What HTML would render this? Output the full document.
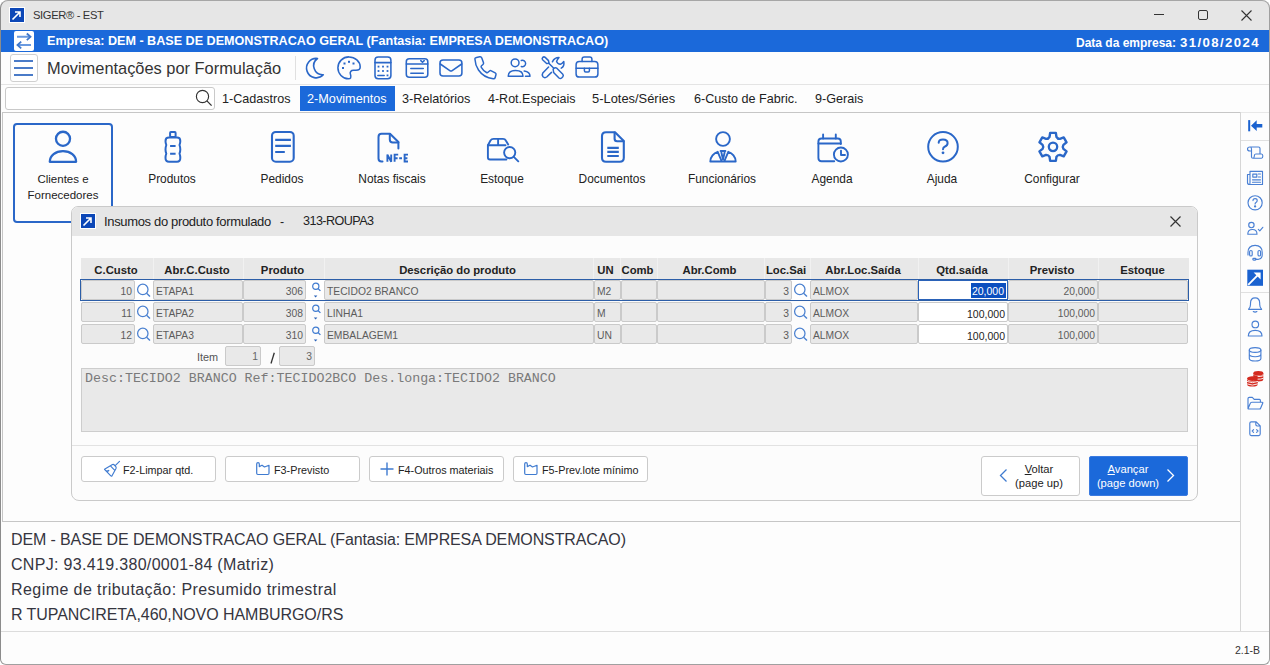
<!DOCTYPE html>
<html><head><meta charset="utf-8">
<style>
*{box-sizing:border-box;margin:0;padding:0}
html,body{width:1270px;height:665px;overflow:hidden;background:#fff;font-family:"Liberation Sans",sans-serif;color:#222}
.a{position:absolute}
#win{position:absolute;left:0;top:0;width:1270px;height:665px;background:#fdfdfd;border-radius:8px 8px 6px 6px;overflow:hidden}
#frame{position:absolute;left:0;top:0;width:1270px;height:665px;border:1px solid #8c8c8c;border-top-color:#a6a6a6;border-right-color:#a0a0a0;border-bottom-color:#a0a0a0;border-radius:8px 8px 6px 6px;pointer-events:none}
.t{white-space:nowrap;line-height:1}
svg{position:absolute;overflow:visible}
.ic{fill:none;stroke:#2a67c8;stroke-width:2.3;stroke-linecap:round;stroke-linejoin:round}
.lbl{position:absolute;width:110px;text-align:center;font-size:11.9px;color:#222;white-space:nowrap;line-height:1}
.c{position:absolute;height:20px;border:1px solid #cacaca;border-radius:2px;background:#e9e9e9;color:#5c5c5c;font-size:10.3px;line-height:22px;padding:0 2px 0 2px;white-space:nowrap;overflow:hidden}
.c.w{background:#fff;color:#222;font-size:10.5px}
.hl{position:absolute;text-align:center;font-size:11.3px;font-weight:bold;color:#222;white-space:nowrap;line-height:1}
.btn{position:absolute;top:456px;width:135px;height:26px;border:1px solid #cbcbcb;border-radius:3px;background:#fff}
.btn span{position:absolute;top:8px;font-size:10.8px;color:#222;white-space:nowrap;line-height:1}
</style></head><body>
<div id="win">
  <!-- title bar -->
  <div class="a" style="left:0;top:0;width:1270px;height:30px;background:#e6e6e6"></div>
  <div class="a" style="left:9px;top:7px;width:16px;height:16px;background:#fff"></div>
  <div class="a" style="left:10px;top:8px;width:14px;height:14px;background:#0c47b7"></div>
  <svg style="left:10px;top:8px" width="14" height="14"><path d="M2.5 11.5 L10 4 M5 4 H10 V9" stroke="#fff" stroke-width="1.6" fill="none"/></svg>
  <div class="a t" style="left:33px;top:10px;font-size:11.2px;letter-spacing:-0.35px;color:#333">SIGER® - EST</div>
  <!-- window controls -->
  <div class="a" style="left:1154px;top:14px;width:10px;height:1px;background:#333"></div>
  <div class="a" style="left:1198px;top:10px;width:10px;height:10px;border:1px solid #333;border-radius:2px"></div>
  <svg style="left:1241px;top:10px" width="11" height="11"><path d="M0.5 0.5 L10.5 10.5 M10.5 0.5 L0.5 10.5" stroke="#333" stroke-width="1.1"/></svg>

  <!-- blue bar -->
  <div class="a" style="left:0;top:30px;width:1270px;height:22px;background:#1b69da"></div>
  <div class="a" style="left:14px;top:31px;width:20px;height:20px;background:#fff;border-radius:2px"></div>
  <svg style="left:14px;top:31px" width="20" height="20"><path d="M3 5.8 H15.5 M17 14 H4.5" stroke="#6a9ae0" stroke-width="2" fill="none"/><path d="M12.8 2.5 L16.5 5.8 L12.8 9.1 M7.2 10.7 L3.5 14 L7.2 17.3" stroke="#3f78cc" stroke-width="1.8" fill="none"/></svg>
  <div class="a t" style="left:47px;top:35px;font-size:12.6px;font-weight:bold;color:#fff">Empresa: DEM - BASE DE DEMONSTRACAO GERAL (Fantasia: EMPRESA DEMONSTRACAO)</div>
  <div class="a t" style="left:1076px;top:36.5px;font-size:12px;font-weight:bold;color:#fff">Data da empresa:</div><div class="a t" style="left:1180px;top:35.5px;font-size:13.2px;letter-spacing:1.4px;font-weight:bold;color:#fff">31/08/2024</div>

  <!-- toolbar -->
  <div class="a" style="left:10px;top:54px;width:28px;height:28px;border:1px solid #cfcfcf;border-radius:3px;background:#fff"></div>
  <div class="a" style="left:14px;top:60px;width:19px;height:2px;background:#4a7bc8"></div>
  <div class="a" style="left:14px;top:67px;width:19px;height:2px;background:#4a7bc8"></div>
  <div class="a" style="left:14px;top:74px;width:19px;height:2px;background:#4a7bc8"></div>
  <div class="a t" style="left:47px;top:60px;font-size:16.4px;color:#333">Movimentações por Formulação</div>
  <div class="a" style="left:295px;top:56px;width:1px;height:24px;background:#e0e0e0"></div>
  <div class="a" style="left:0;top:84px;width:1270px;height:1px;background:#e4e4e4"></div>
  <!-- small toolbar icons -->
  <svg style="left:0;top:0;stroke-width:1.55" width="1270" height="90" class="ic">
    <path d="M317.5 58.5 A9.7 9.7 0 1 0 323.3 74.8 A9 9 0 0 1 317.5 58.5 Z" stroke-width="1.6"/>
    <path d="M349 56.9 C355 56.9 360.2 61.5 360.2 67 C360.2 69.5 358.5 70.3 356 70.3 H353.5 C351 70.3 349.5 72 350.5 74.5 C351.5 77.5 350.5 78.8 348.5 78.8 C342.5 78.8 337.9 73.5 337.9 67.8 C337.9 61.8 342.8 56.9 349 56.9 Z"/>
    <g fill="#2a67c8" stroke="none"><rect x="343.5" y="62.5" width="2" height="2"/><rect x="348" y="60.8" width="2" height="2"/><rect x="352.5" y="62.5" width="2" height="2"/><rect x="342" y="67" width="2" height="2"/></g>
    <rect x="375" y="57" width="15.9" height="21.7" rx="3.2"/>
    <path d="M375 62.6 H390.9"/>
    <g fill="#2a67c8" stroke="none"><rect x="377.6" y="65.7" width="1.8" height="1.8"/><rect x="382.1" y="65.7" width="1.8" height="1.8"/><rect x="386.6" y="65.7" width="1.8" height="1.8"/><rect x="377.6" y="70.1" width="1.8" height="1.8"/><rect x="382.1" y="70.1" width="1.8" height="1.8"/><rect x="386.6" y="70.1" width="1.8" height="1.8"/><rect x="386.6" y="74.5" width="1.8" height="1.8"/></g>
    <path d="M377.8 75.4 H384.2" stroke-width="1.5"/>
    <rect x="406.3" y="58.8" width="21.5" height="18.5" rx="3"/>
    <path d="M406.3 64.1 H427.8 M410.8 68.6 H423.3 M410.8 73.2 H423.3 M420.8 60.6 L422.5 62.3 L424.2 60.6" stroke-width="1.5"/>
    <rect x="440" y="60" width="21.9" height="16" rx="3"/>
    <path d="M440.3 64 L449.8 70.6 Q451 71.4 452.2 70.6 L461.7 64"/>
    <path d="M475 59.5 Q474.5 57.8 476.5 57.4 L479.8 56.8 Q481.3 56.6 481.8 58 L483.5 62.8 Q483.8 63.8 483 64.5 L481.5 65.8 Q480.8 66.5 481.3 67.3 Q483.5 71 486.5 72.5 Q487.3 73 488 72.3 L489.5 71 Q490.3 70.3 491.3 70.8 L495.2 72.8 Q496.2 73.3 496 74.5 L495.2 77.5 Q494.8 79 493.2 78.8 Q483.5 77.5 478.5 70 Q475.2 65 475 59.5 Z" stroke-width="1.5"/>
    <g stroke-width="1.5">
    <circle cx="515.1" cy="62.8" r="3.9"/>
    <path d="M521.3 60.5 A3.2 3.2 0 1 1 521.3 66.5"/>
    <path d="M508.2 76.2 H523 C523 72.5 520 70.5 515.6 70.5 C511.2 70.5 508.2 72.5 508.2 76.2 Z"/>
    <path d="M524.2 71 C527.5 71.5 530 73.5 530 76.2 H525.5"/>
    </g>
    <g stroke-width="1.5">
    <path d="M542.6 59.8 Q541.6 58.5 542.8 57.4 Q543.9 56.4 545.2 57.4 L548.5 60.6 L549 63.2 L546.6 63.5 Z"/>
    <path d="M548.8 63.3 L553.8 68.3"/>
    <path d="M553.4 70.8 Q552.6 69.2 554 68.2 Q555.4 67.2 556.8 68.2 L562.8 74.2 Q563.8 75.4 562.8 76.8 L561.6 78 Q560.4 79 559 78 L553.6 72.4 Z"/>
    <path d="M552.4 61.8 Q554.5 57.5 559 57.6 Q557 60 556.6 61.4 Q557.6 64 560.4 64.2 Q562 63.8 563.8 61.5 Q564.6 66.4 561.2 68.2"/>
    <path d="M548.6 67 L542.8 73 Q541.6 74.8 543 76.8 Q544.8 78.4 546.7 77 L551.5 72.4"/>
    </g>
    <g stroke-width="1.5">
    <rect x="576.1" y="61.6" width="21.8" height="15.5" rx="3.2"/>
    <path d="M582.1 61.6 V59.2 Q582.1 57 584.3 57 H589.7 Q591.9 57 591.9 59.2 V61.6"/>
    <path d="M576.1 68.3 H597.9"/>
    <path d="M584.4 68.3 V70.8 Q584.4 72 585.6 72 H588.2 Q589.4 72 589.4 70.8 V68.3"/>
    </g>
</svg>

  <!-- menu bar -->
  <div class="a" style="left:5px;top:87px;width:210px;height:23px;border:1px solid #c9c9c9;border-radius:3px;background:#fff"></div>
  <svg style="left:195px;top:89px" width="18" height="18"><circle cx="7.5" cy="7.5" r="6.1" stroke="#333" stroke-width="1.15" fill="none"/><path d="M11.9 11.9 L16.6 16.6" stroke="#333" stroke-width="1.3"/></svg>
  <div class="a" style="left:300px;top:86px;width:95px;height:25px;background:#1b69da"></div>
  <div class="a t" style="left:222px;top:93px;font-size:12.6px;color:#222">1-Cadastros</div>
  <div class="a t" style="left:307px;top:93px;font-size:12.7px;color:#fff">2-Movimentos</div>
  <div class="a t" style="left:402px;top:93px;font-size:12.7px;color:#222">3-Relatórios</div>
  <div class="a t" style="left:488px;top:93px;font-size:12.5px;color:#222">4-Rot.Especiais</div>
  <div class="a t" style="left:592px;top:93px;font-size:12.9px;color:#222">5-Lotes/Séries</div>
  <div class="a t" style="left:694px;top:93px;font-size:12.6px;color:#222">6-Custo de Fabric.</div>
  <div class="a t" style="left:815px;top:93px;font-size:12.6px;color:#222">9-Gerais</div>

  <!-- main panel -->
  <div class="a" style="left:2px;top:112px;width:1239px;height:410px;border:1px solid #c6c6c6;background:#fdfdfd"></div>
  <div class="a" style="left:1241px;top:112px;width:28px;height:1px;background:#e8e8e8"></div>
  <!-- sidebar line -->
  <div class="a" style="left:1240px;top:112px;width:1px;height:520px;background:#d6d6d6"></div>

  <!-- big toolbar -->
  <div class="a" style="left:13px;top:123px;width:100px;height:100px;border:2px solid #2a67c8;border-radius:4px"></div>
  <svg style="left:0;top:0" width="1270" height="240" class="ic">
    
    <circle cx="63" cy="138.8" r="7.05"/>
    <path d="M49.8 161.8 C49.8 155.3 55.6 151.2 63 151.2 C70.4 151.2 76.1 155.3 76.1 161.8 Z"/>
    <g stroke-width="2">
    <rect x="170.1" y="132.1" width="5.5" height="5" rx="0.8"/>
    <path d="M169 137.6 H177 Q180.3 137.6 180.3 141 Q180.3 143 179.5 145 Q180.3 147 180.3 149.5 Q180.3 151.5 179.5 153.5 Q180.3 155.5 180.3 158 Q180.3 161.8 177 161.8 H169 Q165.5 161.8 165.5 158 Q165.5 155.5 166.3 153.5 Q165.5 151.5 165.5 149.5 Q165.5 147 166.3 145 Q165.5 143 165.5 141 Q165.5 137.6 169 137.6 Z"/>
    <path d="M170.1 146 H175.6 M170.1 153.8 H175.6" stroke-linecap="butt"/>
    </g>
    <rect x="272" y="132" width="21.7" height="29.7" rx="3.8" stroke-width="2.1"/>
    <path d="M275.2 139.9 H290.9 M275.2 145.9 H290.9 M275.2 152 H284.8" stroke-width="2.1" stroke-linecap="butt"/>
    <g stroke-width="2">
    <path d="M382.5 161.5 H381.5 Q378.5 161.5 378.5 158.5 V137 Q378.5 133.8 381.5 133.8 H390 L398.4 142 V148.5"/>
    <path d="M389.8 134 V139.5 Q389.8 142.5 392.8 142.5 H398.4"/>
    <path d="M387.4 161.8 V154.6 L391.2 161.8 V154.6 M394.6 161.8 V154.6 H398.2 M394.6 158.2 H397.6 M399.2 158.3 H402 M408 154.6 H404.6 V161.5 H408 M404.6 158.2 H407.4" stroke-width="1.9" stroke-linecap="butt" stroke-linejoin="miter"/>
    </g>
    <g stroke-width="1.9">
    <path d="M506.4 159.5 H490 Q487.9 159.5 487.9 157.4 V145.2 L490.5 140.5 Q491.5 138.9 493.5 138.9 H503 Q505 138.9 505.8 140.5 L508.2 144.5"/>
    <path d="M487.9 145.2 H505.5 M498.1 138.9 V145.2"/>
    <circle cx="509.7" cy="152.6" r="5.6"/>
    <path d="M513.8 156.8 L518.3 161.3"/>
    </g>
    <g stroke-width="2.1">
    <path d="M615 132.2 H606 Q602 132.2 602 136.2 V157.7 Q602 161.7 606 161.7 H619.8 Q623.8 161.7 623.8 157.7 V141 L615 132.2 Z"/>
    <path d="M614.6 132.5 V138.7 Q614.6 141.2 617.1 141.2 H623.5"/>
    <path d="M607.3 147.9 H618.8 M607.3 151.9 H618.8 M607.3 156 H618.8" stroke-linecap="butt"/>
    </g>
    <g stroke-width="1.9">
    <circle cx="723" cy="139" r="6.9"/>
    <path d="M710.3 161.5 H735.7 C735.7 157 732.2 153 728.3 151.8 L724.2 161.5 M721.8 161.5 L717.7 151.8 C713.8 153 710.3 157 710.3 161.5 Z"/>
    <path d="M720.6 151 H725.4 M721.4 152.5 L723 159.5 L724.6 152.5"/>
    </g>
    <g stroke-width="1.9">
    <path d="M834.2 161.2 H821.5 Q818.4 161.2 818.4 158 V141.5 Q818.4 138.5 821.5 138.5 H837.8 Q840.8 138.5 840.8 141.5 V144"/>
    <path d="M818.4 143.5 H840.8 M823.1 134.5 V138.5 M835.8 134.5 V138.5"/>
    <circle cx="840.9" cy="154.5" r="7"/>
    <path d="M841 150.6 V155 H845"/>
    </g>
    <circle cx="943" cy="146.8" r="14.8" stroke-width="2"/>
    <path d="M938.7 142.8 Q938.7 139.5 943 139.5 Q947.6 139.5 947.6 143 Q947.6 145.5 945 146.5 Q943 147.3 943 149.3" stroke-width="2"/>
    <circle cx="943" cy="152.8" r="1.4" fill="#2a67c8" stroke="none"/>
    <path stroke-width="2.4" d="M1049.55 136.83 L1050.15 132.84 L1055.85 132.84 L1056.45 136.83 Q1057.56 138.96 1059.95 138.85 L1063.71 137.37 L1066.56 142.31 L1063.41 144.83 Q1062.12 146.85 1063.41 148.87 L1066.56 151.39 L1063.71 156.33 L1059.95 154.85 Q1057.56 154.74 1056.45 156.87 L1055.85 160.86 L1050.15 160.86 L1049.55 156.87 Q1048.44 154.74 1046.05 154.85 L1042.29 156.33 L1039.44 151.39 L1042.59 148.87 Q1043.88 146.85 1042.59 144.83 L1039.44 142.31 L1042.29 137.37 L1046.05 138.85 Q1048.44 138.96 1049.55 136.83 Z"/>
    <circle cx="1053" cy="146.85" r="4.2" stroke-width="2.3"/>

  </svg>
  <div class="lbl" style="left:8px;top:170.5px;line-height:16px;font-size:11.5px">Clientes e<br>Fornecedores</div>
  <div class="lbl" style="left:117px;top:173.5px">Produtos</div>
  <div class="lbl" style="left:227px;top:173.5px">Pedidos</div>
  <div class="lbl" style="left:337px;top:173.5px">Notas fiscais</div>
  <div class="lbl" style="left:447px;top:173.5px">Estoque</div>
  <div class="lbl" style="left:557px;top:173.5px">Documentos</div>
  <div class="lbl" style="left:667px;top:173.5px">Funcionários</div>
  <div class="lbl" style="left:777px;top:173.5px">Agenda</div>
  <div class="lbl" style="left:887px;top:173.5px">Ajuda</div>
  <div class="lbl" style="left:997px;top:173.5px">Configurar</div>

  <!-- sidebar icons -->
  
  <div class="a" style="left:1241px;top:140px;width:28px;height:1px;background:#e0e0e0"></div>
  <div class="a" style="left:1241px;top:292px;width:28px;height:1px;background:#e0e0e0"></div>
  <svg style="left:0;top:0" width="1270" height="450" fill="none" stroke="#4a80d4" stroke-width="1.15" stroke-linejoin="round" stroke-linecap="round">
    <g fill="#1a62d0" stroke="none">
      <rect x="1248.2" y="120.1" width="2" height="11.2"/>
      <path d="M1251 125.7 L1256.7 120.3 V124 H1262.3 V127.4 H1256.7 V131.1 Z"/>
    </g>
    <path d="M1250 147 H1258.5 Q1260 147 1260 148.5 V154 M1250 147 Q1247.5 147 1247.5 149 Q1247.5 151 1250 151 H1251.3 M1250 147 Q1251.5 147 1251.5 149 V157 Q1251.5 158.2 1253 158.2 H1261.5 Q1262.8 158.2 1262.8 156 Q1262.8 154 1261.5 154 H1255.8 Q1254.3 154 1254.3 156 Q1254.3 158.2 1253 158.2"/>
    <path d="M1250 171.3 H1262.5 V184.5 H1249.5 Q1247.5 184.5 1247.5 182.5 V174.5 H1250 Z M1250 174.5 V182.5 Q1250 184.5 1249.5 184.5"/>
        <rect x="1252.8" y="174.1" width="4" height="3"/>
    <path d="M1258.3 174 H1260.5 M1258.3 177 H1260.5 M1252.5 179.8 H1260.5 M1252.5 182.2 H1260.5"/>
    <circle cx="1255.1" cy="202.8" r="7.1"/>
    <path d="M1253 200.6 Q1253 198.6 1255.1 198.6 Q1257.2 198.6 1257.2 200.5 Q1257.2 201.8 1256 202.4 Q1255.1 202.9 1255.1 204"/>
    <circle cx="1255.1" cy="206.3" r="0.6" fill="#4a80d4"/>
    <circle cx="1251.4" cy="225" r="2.7"/>
    <path d="M1247.8 234.2 H1257 Q1257 229.5 1252.4 229.5 Q1247.8 229.5 1247.8 234.2 Z M1258.3 229.3 L1259.8 230.8 L1262.8 227.3"/>
    <path d="M1248 255 V252.5 Q1248 245.4 1255.1 245.4 Q1262.2 245.4 1262.2 252.5 V255 Q1262.2 258.5 1258.5 259.3 H1255.5"/>
    <rect x="1249.6" y="250.5" width="2.6" height="5.5" rx="1.3"/>
    <rect x="1258" y="250.5" width="2.6" height="5.5" rx="1.3"/>
    <rect x="1252.8" y="258.4" width="3.2" height="1.8" rx="0.9"/>
    <rect x="1247.3" y="269.7" width="15.7" height="16.1" fill="#1a62d0" stroke="none"/>
    <path d="M1248.2 284.8 L1257.8 275.2" stroke="#fff" stroke-width="1.9" stroke-linecap="butt"/><path d="M1260.6 272.6 V279.6 L1253.6 272.6 Z" fill="#fff" stroke="none"/>
    <path d="M1248.6 309.3 Q1250.5 307.6 1250.5 304.6 V303.2 Q1250.5 297.8 1255.1 297.8 Q1259.7 297.8 1259.7 303.2 V304.6 Q1259.7 307.6 1261.6 309.3 Z M1253.3 311.6 Q1255.1 312.8 1256.9 311.6"/>
    <circle cx="1255.3" cy="324.4" r="3.3"/>
    <path d="M1248.3 336 H1262 Q1262 330.3 1255.2 330.3 Q1248.3 330.3 1248.3 336 Z"/>
    <ellipse cx="1255.1" cy="350" rx="5.8" ry="2.4"/>
    <path d="M1249.3 350 V358.5 Q1249.3 361 1255.1 361 Q1260.9 361 1260.9 358.5 V350 M1249.3 354.3 Q1249.3 356.7 1255.1 356.7 Q1260.9 356.7 1260.9 354.3"/>
    <g fill="#d42a1f" stroke="none">
      <ellipse cx="1258.3" cy="373.2" rx="5" ry="2.3"/>
      <path d="M1253.3 373.6 V379.2 Q1253.3 381.4 1258.3 381.4 Q1263.3 381.4 1263.3 379.2 V373.6 Q1263.3 375.8 1258.3 375.8 Q1253.3 375.8 1253.3 373.6 Z"/>
      <ellipse cx="1252.4" cy="378.6" rx="5.4" ry="2.4"/>
      <path d="M1247 379 V384.2 Q1247 386.6 1252.4 386.6 Q1257.8 386.6 1257.8 384.2 V379 Q1257.8 381.4 1252.4 381.4 Q1247 381.4 1247 379 Z"/>
    </g>
    <g stroke="#fff" stroke-width="0.9"><path d="M1258 376.6 Q1260.8 376.8 1263.2 375.8 M1258 379.2 Q1260.8 379.4 1263.2 378.4 M1247.2 381.6 Q1252.4 383.9 1257.6 381.6 M1247.2 384 Q1252.4 386.3 1257.6 384"/></g>
    <path d="M1248 408.7 V398.6 Q1248 397.3 1249.3 397.3 H1252.3 L1254.2 399.3 H1259.5 Q1260.4 399.3 1260.4 400.5 V402.2 M1248 408.7 L1250.2 403.5 Q1250.6 402.2 1251.8 402.2 H1262.3 Q1263.1 402.2 1262.7 403.2 L1260.6 408.2 Q1260.3 409 1259.4 409 H1248.5 Z"/>
    <path d="M1256.2 421.8 H1251.3 Q1249.8 421.8 1249.8 423.3 V434.1 Q1249.8 435.6 1251.3 435.6 H1258.7 Q1260.2 435.6 1260.2 434.1 V425.8 Z M1255.8 422 V424.6 Q1255.8 426 1257.2 426 H1260"/>
    <path d="M1253.6 429.6 L1252.2 431 L1253.6 432.4 M1256.6 429.6 L1258 431 L1256.6 432.4" stroke-width="1.1"/>
  </svg>


  <!-- dialog -->
  <!-- DIALOG -->
  <div class="a" style="left:71px;top:206px;width:1127px;height:295px;border:1px solid #cacaca;border-radius:7px 7px 8px 8px;background:#fcfcfc;overflow:hidden">
    <div class="a" style="left:0;top:0;width:1127px;height:29px;background:#e6e6e6"></div>
  </div>
  <div class="a" style="left:80px;top:213px;width:16px;height:16px;background:#fff"></div>
  <div class="a" style="left:81px;top:214px;width:14px;height:14px;background:#0c47b7"></div>
  <svg style="left:81px;top:214px" width="14" height="14"><path d="M2.5 11.5 L10 4 M5 4 H10 V9" stroke="#fff" stroke-width="1.6" fill="none"/></svg>
  <div class="a t" style="left:104px;top:215px;font-size:13px;letter-spacing:-0.34px;color:#222">Insumos do produto formulado</div>
  <div class="a t" style="left:280px;top:216px;font-size:12.3px;color:#222">-</div>
  <div class="a t" style="left:303px;top:215px;font-size:12.6px;letter-spacing:-0.55px;color:#222">313-ROUPA3</div>
  <svg style="left:1170px;top:216px" width="11" height="11"><path d="M0.5 0.5 L10.5 10.5 M10.5 0.5 L0.5 10.5" stroke="#333" stroke-width="1.2"/></svg>
  <div class="a" style="left:81px;top:258px;width:1108px;height:21px;background:#e8e8e8"></div><div class="hl" style="left:80px;top:265px;width:72px">C.Custo</div><div class="a" style="left:153px;top:258px;width:1px;height:21px;background:#f1f1f1"></div><div class="hl" style="left:152px;top:265px;width:90px">Abr.C.Custo</div><div class="a" style="left:243px;top:258px;width:1px;height:21px;background:#f1f1f1"></div><div class="hl" style="left:242px;top:265px;width:81px">Produto</div><div class="a" style="left:324px;top:258px;width:1px;height:21px;background:#f1f1f1"></div><div class="hl" style="left:323px;top:265px;width:269px">Descrição do produto</div><div class="a" style="left:593px;top:258px;width:1px;height:21px;background:#f1f1f1"></div><div class="hl" style="left:592px;top:265px;width:27px">UN</div><div class="a" style="left:620px;top:258px;width:1px;height:21px;background:#f1f1f1"></div><div class="hl" style="left:619px;top:265px;width:37px">Comb</div><div class="a" style="left:657px;top:258px;width:1px;height:21px;background:#f1f1f1"></div><div class="hl" style="left:656px;top:265px;width:107px">Abr.Comb</div><div class="a" style="left:764px;top:258px;width:1px;height:21px;background:#f1f1f1"></div><div class="hl" style="left:763px;top:265px;width:46px">Loc.Sai</div><div class="a" style="left:810px;top:258px;width:1px;height:21px;background:#f1f1f1"></div><div class="hl" style="left:809px;top:265px;width:108px">Abr.Loc.Saída</div><div class="a" style="left:918px;top:258px;width:1px;height:21px;background:#f1f1f1"></div><div class="hl" style="left:917px;top:265px;width:90px">Qtd.saída</div><div class="a" style="left:1008px;top:258px;width:1px;height:21px;background:#f1f1f1"></div><div class="hl" style="left:1007px;top:265px;width:90px">Previsto</div><div class="a" style="left:1098px;top:258px;width:1px;height:21px;background:#f1f1f1"></div><div class="hl" style="left:1097px;top:265px;width:91px">Estoque</div>
  <div class="a" style="left:80px;top:279px;width:1109px;height:22px;border:1.5px solid #2c5ea8"></div>
<div class="c" style="left:81px;top:280px;width:54px;text-align:right">10</div>
<div class="c" style="left:81px;top:302px;width:54px;text-align:right">11</div>
<div class="c" style="left:81px;top:324px;width:54px;text-align:right">12</div>
<div class="a" style="left:135px;top:280px;width:18px;height:20px;background:#fff"></div>
<svg style="left:135px;top:280px" width="18" height="20"><circle cx="7.8" cy="9.4" r="5.2" stroke="#4a80d0" stroke-width="1.25" fill="none"/><path d="M11.6 13.2 L15 16.6" stroke="#4a80d0" stroke-width="1.35" fill="none"/></svg>
<svg style="left:135px;top:302px" width="18" height="20"><circle cx="7.8" cy="9.4" r="5.2" stroke="#4a80d0" stroke-width="1.25" fill="none"/><path d="M11.6 13.2 L15 16.6" stroke="#4a80d0" stroke-width="1.35" fill="none"/></svg>
<svg style="left:135px;top:324px" width="18" height="20"><circle cx="7.8" cy="9.4" r="5.2" stroke="#4a80d0" stroke-width="1.25" fill="none"/><path d="M11.6 13.2 L15 16.6" stroke="#4a80d0" stroke-width="1.35" fill="none"/></svg>
<div class="c" style="left:153px;top:280px;width:90px">ETAPA1</div>
<div class="c" style="left:153px;top:302px;width:90px">ETAPA2</div>
<div class="c" style="left:153px;top:324px;width:90px">ETAPA3</div>
<div class="c" style="left:243px;top:280px;width:63px;text-align:right">306</div>
<div class="c" style="left:243px;top:302px;width:63px;text-align:right">308</div>
<div class="c" style="left:243px;top:324px;width:63px;text-align:right">310</div>
<div class="a" style="left:306px;top:280px;width:18px;height:20px;background:#fff"></div>
<svg style="left:306px;top:280px" width="18" height="20"><circle cx="9.8" cy="6.2" r="3.1" stroke="#3f7bd0" stroke-width="1.2" fill="none"/><path d="M12 8.5 L14.4 10.9" stroke="#3f7bd0" stroke-width="1.3" fill="none"/><path d="M7.8 15.6 H11.4 L9.6 17.4 Z" fill="#2a62b8"/></svg>
<svg style="left:306px;top:302px" width="18" height="20"><circle cx="9.8" cy="6.2" r="3.1" stroke="#3f7bd0" stroke-width="1.2" fill="none"/><path d="M12 8.5 L14.4 10.9" stroke="#3f7bd0" stroke-width="1.3" fill="none"/><path d="M7.8 15.6 H11.4 L9.6 17.4 Z" fill="#2a62b8"/></svg>
<svg style="left:306px;top:324px" width="18" height="20"><circle cx="9.8" cy="6.2" r="3.1" stroke="#3f7bd0" stroke-width="1.2" fill="none"/><path d="M12 8.5 L14.4 10.9" stroke="#3f7bd0" stroke-width="1.3" fill="none"/><path d="M7.8 15.6 H11.4 L9.6 17.4 Z" fill="#2a62b8"/></svg>
<div class="c" style="left:324px;top:280px;width:270px">TECIDO2 BRANCO</div>
<div class="c" style="left:324px;top:302px;width:270px">LINHA1</div>
<div class="c" style="left:324px;top:324px;width:270px">EMBALAGEM1</div>
<div class="c" style="left:594px;top:280px;width:27px">M2</div>
<div class="c" style="left:594px;top:302px;width:27px">M</div>
<div class="c" style="left:594px;top:324px;width:27px">UN</div>
<div class="c" style="left:621px;top:280px;width:36px"></div>
<div class="c" style="left:621px;top:302px;width:36px"></div>
<div class="c" style="left:621px;top:324px;width:36px"></div>
<div class="c" style="left:657px;top:280px;width:108px"></div>
<div class="c" style="left:657px;top:302px;width:108px"></div>
<div class="c" style="left:657px;top:324px;width:108px"></div>
<div class="c" style="left:765px;top:280px;width:27px;text-align:right">3</div>
<div class="c" style="left:765px;top:302px;width:27px;text-align:right">3</div>
<div class="c" style="left:765px;top:324px;width:27px;text-align:right">3</div>
<div class="a" style="left:792px;top:280px;width:18px;height:20px;background:#fff"></div>
<svg style="left:792px;top:280px" width="18" height="20"><circle cx="7.8" cy="9.4" r="5.2" stroke="#4a80d0" stroke-width="1.25" fill="none"/><path d="M11.6 13.2 L15 16.6" stroke="#4a80d0" stroke-width="1.35" fill="none"/></svg>
<svg style="left:792px;top:302px" width="18" height="20"><circle cx="7.8" cy="9.4" r="5.2" stroke="#4a80d0" stroke-width="1.25" fill="none"/><path d="M11.6 13.2 L15 16.6" stroke="#4a80d0" stroke-width="1.35" fill="none"/></svg>
<svg style="left:792px;top:324px" width="18" height="20"><circle cx="7.8" cy="9.4" r="5.2" stroke="#4a80d0" stroke-width="1.25" fill="none"/><path d="M11.6 13.2 L15 16.6" stroke="#4a80d0" stroke-width="1.35" fill="none"/></svg>
<div class="c" style="left:810px;top:280px;width:108px">ALMOX</div>
<div class="c" style="left:810px;top:302px;width:108px">ALMOX</div>
<div class="c" style="left:810px;top:324px;width:108px">ALMOX</div>
<div class="c w" style="left:918px;top:280px;width:90px;text-align:right;border-color:#2a62b8;border-radius:0"></div>
<div class="a" style="left:971px;top:283px;width:35px;height:15px;background:#0b4fbf"></div>
<div class="a t" style="left:918px;top:286px;width:86px;text-align:right;font-size:10.5px;color:#fff">20,000</div>
<div class="c w" style="left:918px;top:302px;width:90px;text-align:right">100,000</div>
<div class="c w" style="left:918px;top:324px;width:90px;text-align:right">100,000</div>
<div class="c" style="left:1008px;top:280px;width:90px;text-align:right">20,000</div>
<div class="c" style="left:1008px;top:302px;width:90px;text-align:right">100,000</div>
<div class="c" style="left:1008px;top:324px;width:90px;text-align:right">100,000</div>
<div class="c" style="left:1098px;top:280px;width:90px"></div>
<div class="c" style="left:1098px;top:302px;width:90px"></div>
<div class="c" style="left:1098px;top:324px;width:90px"></div>
  <!-- item -->
  <div class="a t" style="left:197px;top:352px;font-size:10.9px;color:#555">Item</div>
  <div class="c" style="left:225px;top:346px;width:36px;height:20px;color:#666;text-align:right;line-height:20px">1</div>
  <svg style="left:0;top:0" width="300" height="370"><path d="M271 363.5 L274.3 352.8" stroke="#333" stroke-width="1.3"/></svg>
  <div class="c" style="left:279px;top:346px;width:36px;height:20px;color:#666;text-align:right;line-height:20px">3</div>
  <!-- memo -->
  <div class="a" style="left:81px;top:368px;width:1107px;height:64px;background:#e9e9e9;border:1px solid #cdcdcd"></div>
  <div class="a t" style="left:85px;top:372px;font-family:'Liberation Mono',monospace;font-size:13.3px;color:#7a7a7a">Desc:TECIDO2 BRANCO Ref:TECIDO2BCO Des.longa:TECIDO2 BRANCO</div>
  <div class="a" style="left:72px;top:445px;width:1125px;height:1px;background:#e2e2e2"></div>
  <!-- buttons -->
  <div class="btn" style="left:81px">
    <svg style="left:21px;top:3px" width="18" height="18"><path d="M16.5 1.3 L12.2 5.6 M1.5 9.3 L9.5 4.6 Q10.5 4.1 11.3 5 L12.8 6.7 Q13.4 7.5 13 8.4 L9 15.8 Q8.5 16.5 7.8 15.9 Z M7.9 6.4 L11.8 10.3 M4 10.6 Q5 11.8 5.8 10.4" stroke="#3f7bd0" stroke-width="1.15" fill="none" stroke-linejoin="round" stroke-linecap="round"/></svg>
    <span style="left:41px">F2-Limpar qtd.</span></div>
  <div class="btn" style="left:225px">
    <svg style="left:30px;top:5px" width="14" height="14"><path d="M0.7 2 Q0.7 0.6 2 0.6 Q3.3 0.6 3.3 2 V4.6 L6 3.2 L8.5 5 L13 3.3 V11.3 Q13 12.5 11.8 12.5 H1.9 Q0.7 12.5 0.7 11.3 Z" stroke="#3f7bd0" stroke-width="1.2" fill="none" stroke-linejoin="round"/></svg>
    <span style="left:48px">F3-Previsto</span></div>
  <div class="btn" style="left:369px">
    <svg style="left:10px;top:5px" width="14" height="14"><path d="M7 0.5 V13.5 M0.5 7 H13.5" stroke="#3f7bd0" stroke-width="1.4" fill="none"/></svg>
    <span style="left:28px">F4-Outros materiais</span></div>
  <div class="btn" style="left:513px">
    <svg style="left:9.5px;top:5px" width="14" height="14"><path d="M0.7 2 Q0.7 0.6 2 0.6 Q3.3 0.6 3.3 2 V4.6 L6 3.2 L8.5 5 L13 3.3 V11.3 Q13 12.5 11.8 12.5 H1.9 Q0.7 12.5 0.7 11.3 Z" stroke="#3f7bd0" stroke-width="1.2" fill="none" stroke-linejoin="round"/></svg>
    <span style="left:28px">F5-Prev.lote mínimo</span></div>
  <div class="a" style="left:981px;top:456px;width:99px;height:40px;border:1px solid #cbcbcb;border-radius:3px;background:#fff"></div>
  <svg style="left:999px;top:469px" width="10" height="14"><path d="M7.5 0.5 L1.5 6.5 L7.5 12.5" stroke="#3f7bd0" stroke-width="1.3" fill="none"/></svg>
  <div class="a t" style="left:1001px;top:462px;width:76px;text-align:center;font-size:11.2px;color:#222;line-height:14px"><u>V</u>oltar<br>(page up)</div>
  <div class="a" style="left:1089px;top:456px;width:99px;height:40px;border:1px solid #3a7ae0;border-radius:2px;background:#1b69da"></div>
  <svg style="left:1166px;top:469px" width="10" height="14"><path d="M1.5 0.5 L7.5 6.5 L1.5 12.5" stroke="#fff" stroke-width="1.3" fill="none"/></svg>
  <div class="a t" style="left:1090px;top:462px;width:76px;text-align:center;font-size:11.2px;color:#fff;line-height:14px"><u>A</u>vançar<br>(page down)</div>
<!-- /DIALOG -->

  <!-- info -->
  <div class="a t" style="left:11px;top:532px;font-size:16px;color:#35353f;letter-spacing:-0.12px">DEM - BASE DE DEMONSTRACAO GERAL (Fantasia: EMPRESA DEMONSTRACAO)</div>
  <div class="a t" style="left:11px;top:557px;font-size:16px;color:#35353f;letter-spacing:0.32px">CNPJ: 93.419.380/0001-84 (Matriz)</div>
  <div class="a t" style="left:11px;top:582px;font-size:16px;color:#35353f;letter-spacing:0.43px">Regime de tributação: Presumido trimestral</div>
  <div class="a t" style="left:11px;top:607px;font-size:16px;color:#35353f;letter-spacing:-0.06px">R TUPANCIRETA,460,NOVO HAMBURGO/RS</div>
  <div class="a" style="left:0;top:631px;width:1270px;height:1px;background:#dcdcdc"></div>
  <div class="a t" style="left:1235px;top:645px;font-size:10.5px;color:#333">2.1-B</div>
</div>
<div id="frame"></div>
</body></html>
